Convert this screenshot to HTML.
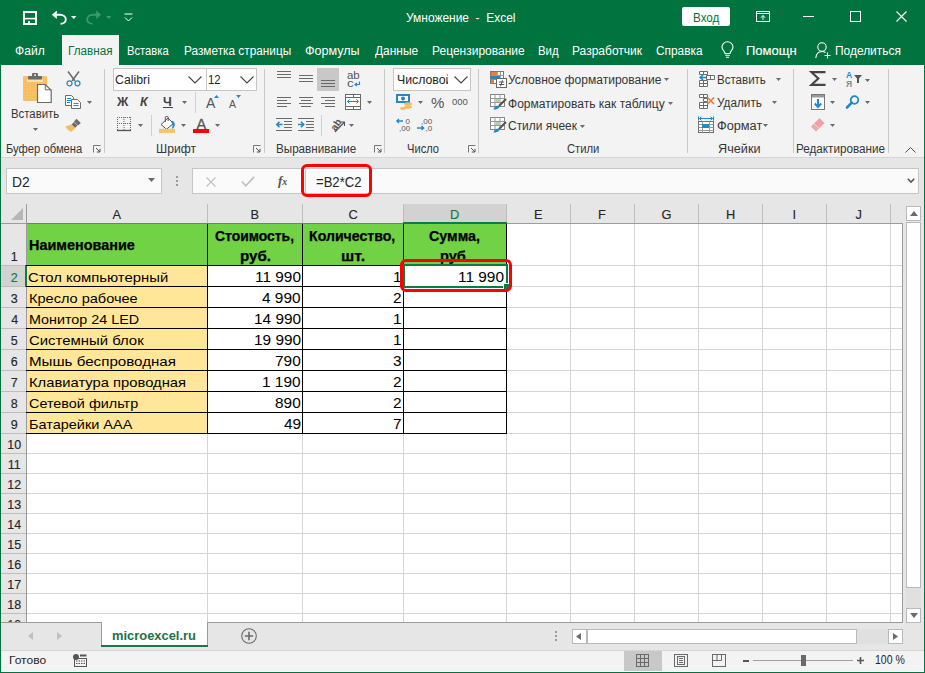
<!DOCTYPE html>
<html><head><meta charset="utf-8">
<style>
*{margin:0;padding:0;box-sizing:border-box}
html,body{width:925px;height:673px;overflow:hidden;background:#fff;font-family:"Liberation Sans",sans-serif;position:relative}
.a{position:absolute}
.t{white-space:nowrap}
svg{overflow:visible}
</style></head><body>
<div class="a" style="left:0px;top:0px;width:925px;height:65px;background:#00733f;"></div>
<svg class="a" style="left:23px;top:11px" width="14" height="14" viewBox="0 0 14 14"><path d="M1 1H13V13H1Z" fill="none" stroke="#fff" stroke-width="2"/><path d="M2 7.6H12" stroke="#fff" stroke-width="1.6"/><rect x="5" y="10.2" width="2" height="3" fill="#fff"/></svg>
<svg class="a" style="left:51px;top:10px" width="16" height="15" viewBox="0 0 16 15"><path d="M5 4.8H9C12.5 4.8 14.8 7 14.8 9.5C14.8 12 12.5 13.8 9.5 13.8" fill="none" stroke="#fff" stroke-width="1.9"/><path d="M0.8 4.8L5.8 0.6V9Z" fill="#fff"/></svg>
<svg class="a" style="left:71px;top:16px" width="6" height="3" viewBox="0 0 6 3"><path d="M0 0H5.5L2.75 3Z" fill="#fff"/></svg>
<svg class="a" style="left:86px;top:10px" width="16" height="15" viewBox="0 0 16 15"><path d="M11 4.8H7C3.5 4.8 1.2 7 1.2 9.5C1.2 12 3.5 13.8 6.5 13.8" fill="none" stroke="#3a9a68" stroke-width="1.9"/><path d="M15.2 4.8L10.2 0.6V9Z" fill="#3a9a68"/></svg>
<svg class="a" style="left:106px;top:16px" width="6" height="3" viewBox="0 0 6 3"><path d="M0 0H5.5L2.75 3Z" fill="#3d9c6c"/></svg>
<svg class="a" style="left:124px;top:13px" width="9" height="9" viewBox="0 0 9 9"><path d="M0.5 1H8.5" stroke="#fff" stroke-width="1"/><path d="M1 4.5L4.5 8L8 4.5" fill="none" stroke="#fff" stroke-width="1"/></svg>
<div class="a t" style="left:406.33px;top:12.00px;font-size:12.3px;line-height:12.3px;color:#fff;font-weight:normal;font-style:normal;transform:scaleX(0.9721);transform-origin:0 0;">Умножение&nbsp; -&nbsp; Excel</div>
<div class="a" style="left:682px;top:7px;width:48px;height:19px;background:#fff;border-radius:2px"></div>
<div class="a t" style="left:693.03px;top:12.00px;font-size:12px;line-height:12px;color:#00733f;font-weight:normal;font-style:normal;transform:scaleX(0.9731);transform-origin:0 0;">Вход</div>
<svg class="a" style="left:756px;top:11px" width="14" height="11" viewBox="0 0 14 11"><rect x="0.5" y="0.5" width="13" height="10" fill="none" stroke="#fff" stroke-width="1"/><path d="M0.5 2.5H13.5" stroke="#fff" stroke-width="1"/><path d="M7 9V4.5M4.8 6.8L7 4.5L9.2 6.8" fill="none" stroke="#fff" stroke-width="1"/></svg>
<div class="a" style="left:803px;top:16px;width:11px;height:1px;background:#fff;"></div>
<svg class="a" style="left:850px;top:11px" width="11" height="11" viewBox="0 0 11 11"><rect x="0.5" y="0.5" width="10" height="10" fill="none" stroke="#fff" stroke-width="1"/></svg>
<svg class="a" style="left:896px;top:11px" width="11" height="11" viewBox="0 0 11 11"><path d="M0.5 0.5L10.5 10.5M10.5 0.5L0.5 10.5" stroke="#fff" stroke-width="1.1"/></svg>
<div class="a" style="left:62px;top:35px;width:57px;height:30px;background:#f3f3f3;"></div>
<div class="a t" style="left:15.12px;top:45.00px;font-size:12.3px;line-height:12.3px;color:#fff;font-weight:normal;font-style:normal;transform:scaleX(0.9828);transform-origin:0 0;">Файл</div>
<div class="a t" style="left:67.85px;top:45.00px;font-size:12.3px;line-height:12.3px;color:#00733f;font-weight:normal;font-style:normal;transform:scaleX(0.9511);transform-origin:0 0;">Главная</div>
<div class="a t" style="left:126.79px;top:45.00px;font-size:12.3px;line-height:12.3px;color:#fff;font-weight:normal;font-style:normal;transform:scaleX(0.9111);transform-origin:0 0;">Вставка</div>
<div class="a t" style="left:183.74px;top:45.00px;font-size:12.3px;line-height:12.3px;color:#fff;font-weight:normal;font-style:normal;transform:scaleX(0.9609);transform-origin:0 0;">Разметка страницы</div>
<div class="a t" style="left:304.98px;top:45.00px;font-size:12.3px;line-height:12.3px;color:#fff;font-weight:normal;font-style:normal;transform:scaleX(1.0212);transform-origin:0 0;">Формулы</div>
<div class="a t" style="left:374.70px;top:45.00px;font-size:12.3px;line-height:12.3px;color:#fff;font-weight:normal;font-style:normal;transform:scaleX(0.9727);transform-origin:0 0;">Данные</div>
<div class="a t" style="left:432.12px;top:45.00px;font-size:12.3px;line-height:12.3px;color:#fff;font-weight:normal;font-style:normal;transform:scaleX(0.9763);transform-origin:0 0;">Рецензирование</div>
<div class="a t" style="left:538.47px;top:45.00px;font-size:12.3px;line-height:12.3px;color:#fff;font-weight:normal;font-style:normal;transform:scaleX(0.9286);transform-origin:0 0;">Вид</div>
<div class="a t" style="left:572.42px;top:45.00px;font-size:12.3px;line-height:12.3px;color:#fff;font-weight:normal;font-style:normal;transform:scaleX(0.9761);transform-origin:0 0;">Разработчик</div>
<div class="a t" style="left:656.03px;top:45.00px;font-size:12.3px;line-height:12.3px;color:#fff;font-weight:normal;font-style:normal;transform:scaleX(0.9660);transform-origin:0 0;">Справка</div>
<div class="a t" style="left:746.34px;top:45.00px;font-size:12.3px;line-height:12.3px;color:#fff;font-weight:normal;font-style:normal;transform:scaleX(1.0587);transform-origin:0 0;-webkit-text-stroke:0.15px #fff;">Помощн</div>
<div class="a t" style="left:834.53px;top:45.00px;font-size:12.3px;line-height:12.3px;color:#fff;font-weight:normal;font-style:normal;transform:scaleX(0.9697);transform-origin:0 0;">Поделиться</div>
<svg class="a" style="left:721px;top:42px" width="13" height="16" viewBox="0 0 13 16"><path d="M4 11.5 C4 9 1 8 1 5.2 A5.5 5.5 0 0 1 12 5.2 C12 8 9 9 9 11.5 Z" fill="none" stroke="#fff" stroke-width="1.1"/><path d="M4.2 13.3H8.8M5 15.3H8" stroke="#fff" stroke-width="1.1"/></svg>
<svg class="a" style="left:815px;top:42px" width="17" height="17" viewBox="0 0 17 17"><circle cx="7" cy="5" r="4.2" fill="none" stroke="#fff" stroke-width="1.1"/><path d="M0.8 16 C1.2 11.5 4 9.5 7 9.5 C8.5 9.5 9.5 9.8 10.5 10.5" fill="none" stroke="#fff" stroke-width="1.1"/><path d="M12.5 10.5V16.5M9.5 13.5H15.5" stroke="#fff" stroke-width="1.1"/></svg>
<div class="a" style="left:1px;top:65px;width:923px;height:92px;background:#f3f3f3;"></div>
<div class="a" style="left:1px;top:157px;width:923px;height:1px;background:#d5d5d5;"></div>
<div class="a" style="left:104px;top:69px;width:1px;height:84px;background:#c8c8c8;"></div>
<div class="a" style="left:264px;top:69px;width:1px;height:84px;background:#c8c8c8;"></div>
<div class="a" style="left:384px;top:69px;width:1px;height:84px;background:#c8c8c8;"></div>
<div class="a" style="left:478px;top:69px;width:1px;height:84px;background:#c8c8c8;"></div>
<div class="a" style="left:687px;top:69px;width:1px;height:84px;background:#c8c8c8;"></div>
<div class="a" style="left:793px;top:69px;width:1px;height:84px;background:#c8c8c8;"></div>
<div class="a" style="left:888px;top:69px;width:1px;height:84px;background:#c8c8c8;"></div>
<div class="a t" style="left:5.79px;top:143.00px;font-size:12.3px;line-height:12.3px;color:#363636;font-weight:normal;font-style:normal;transform:scaleX(0.9133);transform-origin:0 0;">Буфер обмена</div>
<svg class="a" style="left:93px;top:145px" width="8" height="8" viewBox="0 0 8 8"><path d="M0.5 7.5V0.5H7.5" fill="none" stroke="#777" stroke-width="1"/><path d="M3 3L7 7M7 3.8V7H3.8" fill="none" stroke="#555" stroke-width="1"/></svg>
<div class="a t" style="left:156.41px;top:143.00px;font-size:12.3px;line-height:12.3px;color:#363636;font-weight:normal;font-style:normal;transform:scaleX(0.9897);transform-origin:0 0;">Шрифт</div>
<svg class="a" style="left:253px;top:145px" width="8" height="8" viewBox="0 0 8 8"><path d="M0.5 7.5V0.5H7.5" fill="none" stroke="#777" stroke-width="1"/><path d="M3 3L7 7M7 3.8V7H3.8" fill="none" stroke="#555" stroke-width="1"/></svg>
<div class="a t" style="left:276.05px;top:143.00px;font-size:12.3px;line-height:12.3px;color:#363636;font-weight:normal;font-style:normal;transform:scaleX(0.9470);transform-origin:0 0;">Выравнивание</div>
<svg class="a" style="left:374px;top:145px" width="8" height="8" viewBox="0 0 8 8"><path d="M0.5 7.5V0.5H7.5" fill="none" stroke="#777" stroke-width="1"/><path d="M3 3L7 7M7 3.8V7H3.8" fill="none" stroke="#555" stroke-width="1"/></svg>
<div class="a t" style="left:406.69px;top:143.00px;font-size:12.3px;line-height:12.3px;color:#363636;font-weight:normal;font-style:normal;transform:scaleX(0.9059);transform-origin:0 0;">Число</div>
<svg class="a" style="left:468px;top:145px" width="8" height="8" viewBox="0 0 8 8"><path d="M0.5 7.5V0.5H7.5" fill="none" stroke="#777" stroke-width="1"/><path d="M3 3L7 7M7 3.8V7H3.8" fill="none" stroke="#555" stroke-width="1"/></svg>
<div class="a t" style="left:566.59px;top:143.00px;font-size:12.3px;line-height:12.3px;color:#363636;font-weight:normal;font-style:normal;transform:scaleX(0.9147);transform-origin:0 0;">Стили</div>
<div class="a t" style="left:718.47px;top:143.00px;font-size:12.3px;line-height:12.3px;color:#363636;font-weight:normal;font-style:normal;transform:scaleX(1.0308);transform-origin:0 0;">Ячейки</div>
<div class="a t" style="left:796.35px;top:143.00px;font-size:12.3px;line-height:12.3px;color:#363636;font-weight:normal;font-style:normal;transform:scaleX(0.9511);transform-origin:0 0;">Редактирование</div>
<svg class="a" style="left:905px;top:147px" width="11" height="6" viewBox="0 0 11 6"><path d="M0.5 5.5L5.5 0.5L10.5 5.5" fill="none" stroke="#555" stroke-width="1"/></svg>
<svg class="a" style="left:23px;top:73px" width="29" height="31" viewBox="0 0 29 31">
<defs><pattern id="dots" width="3" height="3" patternUnits="userSpaceOnUse"><rect width="3" height="3" fill="#f7bd5c"/><circle cx="1" cy="1" r="0.6" fill="#fbd89b"/></pattern></defs>
<rect x="0" y="3" width="24" height="25" rx="1" fill="url(#dots)"/>
<rect x="4" y="6.3" width="16" height="2.6" fill="#fbe2b0"/>
<rect x="5" y="3" width="14" height="3.6" rx="0.8" fill="#6b6b6b"/>
<rect x="9" y="0" width="6" height="4" rx="1" fill="#6b6b6b"/>
<rect x="11.2" y="1.3" width="1.8" height="1.6" fill="#f3f3f3"/>
<path d="M14.5 11.5H22.3L28.2 17.3V29.5H14.5Z" fill="#fff" stroke="#6b6b6b" stroke-width="1.2"/>
<path d="M22.3 11.5V16.8H28.2" fill="none" stroke="#6b6b6b" stroke-width="1"/>
</svg>
<div class="a t" style="left:10.68px;top:108.00px;font-size:12.3px;line-height:12.3px;color:#363636;font-weight:normal;font-style:normal;transform:scaleX(0.9235);transform-origin:0 0;">Вставить</div>
<svg class="a" style="left:33px;top:128px" width="5" height="3" viewBox="0 0 5 3"><path d="M0 0H5L2.5 3Z" fill="#6a6a6a"/></svg>
<svg class="a" style="left:66px;top:71px" width="15" height="16" viewBox="0 0 15 16"><path d="M2 0.5L9 10M13 0.5L6 10" stroke="#6a6a6a" stroke-width="1.5"/><circle cx="3.5" cy="12.3" r="2.5" fill="none" stroke="#1f8ac8" stroke-width="1.2"/><circle cx="11.5" cy="12.3" r="2.5" fill="none" stroke="#1f8ac8" stroke-width="1.2"/></svg>
<svg class="a" style="left:65px;top:95px" width="16" height="14" viewBox="0 0 16 14"><path d="M0.5 0.5H6.5L8.5 2.5V10.5H0.5Z" fill="#fff" stroke="#6d6d6d" stroke-width="1"/><path d="M2 3.5H6M2 5.5H6M2 7.5H5" stroke="#1f8ac8" stroke-width="1"/><path d="M6.5 4.5H12.5L15.5 7.5V13.5H6.5Z" fill="#fff" stroke="#6d6d6d" stroke-width="1"/><path d="M8.5 8.5H13.5M8.5 10.5H13.5" stroke="#1f8ac8" stroke-width="1"/></svg>
<svg class="a" style="left:87px;top:101px" width="5" height="3" viewBox="0 0 5 3"><path d="M0 0H5L2.5 3Z" fill="#6a6a6a"/></svg>
<svg class="a" style="left:65px;top:118px" width="17" height="14" viewBox="0 0 17 14"><path d="M11.5 0.8L15.8 5 L13 7.5 L9 3.5Z" fill="#6d6d6d"/><path d="M9 4L12.5 7.5L10 10L6.5 6.5Z" fill="#6d6d6d"/><path d="M6.3 6.5L10 10.2L6.5 13.7C4.5 13.5 1.5 11 0.3 8.5Z" fill="#f7bd5c"/></svg>
<div class="a" style="left:113px;top:68px;width:94px;height:23px;background:#fff;border:1px solid #c6c6c6"></div>
<div class="a" style="left:206px;top:68px;width:51px;height:23px;background:#fff;border:1px solid #c6c6c6"></div>
<div class="a t" style="left:115.31px;top:74.00px;font-size:12.5px;line-height:12.5px;color:#262626;font-weight:normal;font-style:normal;transform:scaleX(0.9853);transform-origin:0 0;">Calibri</div>
<svg class="a" style="left:188px;top:76px" width="14" height="8" viewBox="0 0 14 8"><path d="M0.5 0.5L7 7L13.5 0.5" fill="none" stroke="#444" stroke-width="1.1"/></svg>
<div class="a t" style="left:208.49px;top:74.00px;font-size:12.5px;line-height:12.5px;color:#262626;font-weight:normal;font-style:normal;transform:scaleX(0.9077);transform-origin:0 0;">12</div>
<svg class="a" style="left:240px;top:76px" width="14" height="8" viewBox="0 0 14 8"><path d="M0.5 0.5L7 7L13.5 0.5" fill="none" stroke="#444" stroke-width="1.1"/></svg>
<div class="a t" style="left:117.00px;top:96.00px;font-size:12.5px;line-height:12.5px;color:#444444;font-weight:bold;font-style:normal;">Ж</div>
<div class="a t" style="left:140.00px;top:96.00px;font-size:12.5px;line-height:12.5px;color:#444444;font-weight:bold;font-style:normal;font-style:italic">К</div>
<div class="a t" style="left:163.00px;top:96.00px;font-size:12.5px;line-height:12.5px;color:#444444;font-weight:bold;font-style:normal;">Ч</div>
<div class="a" style="left:163px;top:107px;width:10px;height:1.3px;background:#444444;"></div>
<svg class="a" style="left:182px;top:101px" width="5" height="3" viewBox="0 0 5 3"><path d="M0 0H5L2.5 3Z" fill="#6a6a6a"/></svg>
<div class="a" style="left:195px;top:92px;width:1px;height:21px;background:#d0d0d0;"></div>
<div class="a t" style="left:206.00px;top:96.00px;font-size:14px;line-height:14px;color:#555;font-weight:normal;font-style:normal;">A</div>
<svg class="a" style="left:214px;top:95px" width="5" height="3" viewBox="0 0 5 3"><path d="M0 3L2.5 0L5 3Z" fill="#1f8ac8"/></svg>
<div class="a t" style="left:229.00px;top:99.00px;font-size:10.5px;line-height:10.5px;color:#555;font-weight:normal;font-style:normal;">A</div>
<svg class="a" style="left:236px;top:95px" width="5" height="3" viewBox="0 0 5 3"><path d="M0 0L2.5 3L5 0Z" fill="#1f8ac8"/></svg>
<svg class="a" style="left:117px;top:117px" width="14" height="15" viewBox="0 0 14 15"><path d="M0.5 0V13M13.5 0V13M7 0V13M0 0.5H14M0 6.5H14" fill="none" stroke="#666" stroke-width="1" stroke-dasharray="1 1"/><path d="M0 13.5H14" stroke="#555" stroke-width="1.3"/></svg>
<svg class="a" style="left:138px;top:124px" width="5" height="3" viewBox="0 0 5 3"><path d="M0 0H5L2.5 3Z" fill="#6a6a6a"/></svg>
<div class="a" style="left:151px;top:115px;width:1px;height:21px;background:#d0d0d0;"></div>
<svg class="a" style="left:159px;top:116px" width="17" height="18" viewBox="0 0 17 18"><path d="M2 8.5L9 2L14.5 7.5L7.5 13.2Z" fill="#fff" stroke="#555" stroke-width="1"/><path d="M6.3 6V1.3Q6.3 0.5 7.3 0.5H8.2Q9.2 0.5 9.2 1.3V5" fill="none" stroke="#555" stroke-width="1"/><path d="M13.2 4.8C16.3 6 16.8 9.5 13.8 12.8L12.8 12.2C14 10 14 8 12.5 6.5Z" fill="#1f8ac8"/><rect x="0" y="12.8" width="16" height="4.3" fill="#f9c46a"/></svg>
<svg class="a" style="left:181px;top:124px" width="5" height="3" viewBox="0 0 5 3"><path d="M0 0H5L2.5 3Z" fill="#6a6a6a"/></svg>
<div class="a t" style="left:196.50px;top:117.00px;font-size:14.5px;line-height:14.5px;color:#555;font-weight:normal;font-style:normal;-webkit-text-stroke:0.3px #555;">A</div>
<div class="a" style="left:193px;top:129px;width:16px;height:4px;background:#fe0000;"></div>
<svg class="a" style="left:215px;top:124px" width="5" height="3" viewBox="0 0 5 3"><path d="M0 0H5L2.5 3Z" fill="#6a6a6a"/></svg>
<svg class="a" style="left:277px;top:71px" width="14" height="9" viewBox="0 0 14 9"><rect x="0" y="0" width="14" height="1" fill="#6a6a6a"/><rect x="0" y="3" width="14" height="1" fill="#6a6a6a"/><rect x="0" y="6" width="14" height="1" fill="#6a6a6a"/></svg>
<svg class="a" style="left:299px;top:75px" width="14" height="9" viewBox="0 0 14 9"><rect x="0" y="0" width="14" height="1" fill="#6a6a6a"/><rect x="0" y="3" width="14" height="1" fill="#6a6a6a"/><rect x="0" y="6" width="14" height="1" fill="#6a6a6a"/></svg>
<div class="a" style="left:317px;top:68px;width:22px;height:23px;background:#c8c8c8;"></div>
<svg class="a" style="left:321px;top:80px" width="14" height="9" viewBox="0 0 14 9"><rect x="0" y="0" width="14" height="1" fill="#6a6a6a"/><rect x="0" y="3" width="14" height="1" fill="#6a6a6a"/><rect x="0" y="6" width="14" height="1" fill="#6a6a6a"/></svg>
<div class="a t" style="left:347.00px;top:70.00px;font-size:11px;line-height:11px;color:#555;font-weight:normal;font-style:normal;transform:scaleX(1.0417);transform-origin:0 0;">ab</div>
<div class="a t" style="left:347.00px;top:78.00px;font-size:11px;line-height:11px;color:#555;font-weight:normal;font-style:normal;transform:scaleX(1.2000);transform-origin:0 0;">c</div>
<svg class="a" style="left:354px;top:81px" width="7" height="6" viewBox="0 0 7 6"><path d="M5.5 0.5V3.5H1.5M3 2L1 3.5L3 5" fill="none" stroke="#1f8ac8" stroke-width="1.2"/></svg>
<svg class="a" style="left:277px;top:97px" width="14" height="12" viewBox="0 0 14 12"><rect x="0" y="0" width="14" height="1" fill="#6a6a6a"/><rect x="0" y="3" width="10" height="1" fill="#6a6a6a"/><rect x="0" y="6" width="14" height="1" fill="#6a6a6a"/><rect x="0" y="9" width="10" height="1" fill="#6a6a6a"/></svg>
<svg class="a" style="left:299px;top:97px" width="14" height="12" viewBox="0 0 14 12"><rect x="0.0" y="0" width="14" height="1" fill="#6a6a6a"/><rect x="2.0" y="3" width="10" height="1" fill="#6a6a6a"/><rect x="0.0" y="6" width="14" height="1" fill="#6a6a6a"/><rect x="2.0" y="9" width="10" height="1" fill="#6a6a6a"/></svg>
<svg class="a" style="left:321px;top:97px" width="14" height="12" viewBox="0 0 14 12"><rect x="0" y="0" width="14" height="1" fill="#6a6a6a"/><rect x="4" y="3" width="10" height="1" fill="#6a6a6a"/><rect x="0" y="6" width="14" height="1" fill="#6a6a6a"/><rect x="4" y="9" width="10" height="1" fill="#6a6a6a"/></svg>
<svg class="a" style="left:345px;top:94px" width="16" height="16" viewBox="0 0 16 16"><rect x="0.5" y="0.5" width="15" height="15" fill="#fff" stroke="#6a6a6a" stroke-width="1"/><path d="M0.5 3.5H15.5M0.5 12.5H15.5M8.5 0.5V3.5M8.5 12.5V15.5" stroke="#6a6a6a" stroke-width="1"/><path d="M2.5 7.5H13.5M4.5 5.5L2.5 7.5L4.5 9.5M11.5 5.5L13.5 7.5L11.5 9.5" fill="none" stroke="#1f8ac8" stroke-width="1"/></svg>
<svg class="a" style="left:367px;top:101px" width="5" height="3" viewBox="0 0 5 3"><path d="M0 0H5L2.5 3Z" fill="#6a6a6a"/></svg>
<svg class="a" style="left:276px;top:118px" width="16" height="15" viewBox="0 0 16 15"><path d="M0 0.5H16M8 3.5H16M8 6.5H16M8 9.5H16M0 12.5H16" stroke="#6a6a6a" stroke-width="1"/><path d="M0.8 6.5H6.5M3.5 3.8L0.8 6.5L3.5 9.2" fill="none" stroke="#1f8ac8" stroke-width="1.6"/></svg>
<svg class="a" style="left:298px;top:118px" width="16" height="15" viewBox="0 0 16 15"><path d="M0 0.5H16M8 3.5H16M8 6.5H16M8 9.5H16M0 12.5H16" stroke="#6a6a6a" stroke-width="1"/><path d="M0 6.5H5.7M3 3.8L5.7 6.5L3 9.2" fill="none" stroke="#1f8ac8" stroke-width="1.6"/></svg>
<div class="a" style="left:321px;top:115px;width:1px;height:21px;background:#d0d0d0;"></div>
<svg class="a" style="left:329px;top:117px" width="17" height="16" viewBox="0 0 17 16"><text x="1" y="12" font-size="10" font-weight="bold" fill="#555" transform="rotate(-55 6 8)" font-family="Liberation Sans">ab</text><path d="M6 15L15 5.5M11.5 5H15.5V9" fill="none" stroke="#555" stroke-width="1.1"/></svg>
<svg class="a" style="left:349px;top:124px" width="5" height="3" viewBox="0 0 5 3"><path d="M0 0H5L2.5 3Z" fill="#6a6a6a"/></svg>
<div class="a" style="left:393px;top:68px;width:78px;height:23px;background:#fff;border:1px solid #c6c6c6"></div>
<div class="a t" style="left:397.00px;top:74.00px;font-size:12.3px;line-height:12.3px;color:#262626;font-weight:normal;font-style:normal;width:51px;overflow:hidden;">Числовой</div>
<svg class="a" style="left:454px;top:76px" width="14" height="8" viewBox="0 0 14 8"><path d="M0.5 0.5L7 7L13.5 0.5" fill="none" stroke="#444" stroke-width="1.1"/></svg>
<svg class="a" style="left:396px;top:94px" width="17" height="16" viewBox="0 0 17 16"><rect x="0" y="0" width="14" height="9" fill="#1f8ac8"/><rect x="2" y="2" width="10" height="5" fill="#fff"/><circle cx="7" cy="4.5" r="2" fill="#1f8ac8"/><ellipse cx="12" cy="10" rx="4" ry="1.7" fill="#f7bd5c"/><ellipse cx="12" cy="13" rx="4" ry="1.7" fill="#f7bd5c"/><ellipse cx="7" cy="14.5" rx="3" ry="1.4" fill="#f7bd5c"/></svg>
<svg class="a" style="left:418px;top:101px" width="5" height="3" viewBox="0 0 5 3"><path d="M0 0H5L2.5 3Z" fill="#6a6a6a"/></svg>
<div class="a t" style="left:431.00px;top:95.00px;font-size:15px;line-height:15px;color:#555;font-weight:normal;font-style:normal;">%</div>
<div class="a t" style="left:452.00px;top:97.00px;font-size:9.5px;line-height:9.5px;color:#555;font-weight:normal;font-style:normal;">000</div>
<div class="a t" style="left:405.50px;top:118.00px;font-size:8px;line-height:8px;color:#555;font-weight:normal;font-style:normal;">0</div>
<div class="a t" style="left:399.00px;top:125.00px;font-size:8px;line-height:8px;color:#555;font-weight:normal;font-style:normal;">,00</div>
<svg class="a" style="left:396px;top:118px" width="8" height="6" viewBox="0 0 8 6"><path d="M7 3H0.8M3 1L0.8 3L3 5" fill="none" stroke="#1f8ac8" stroke-width="1.3"/></svg>
<div class="a t" style="left:421.00px;top:118.00px;font-size:8px;line-height:8px;color:#555;font-weight:normal;font-style:normal;">,00</div>
<div class="a t" style="left:425.50px;top:125.00px;font-size:8px;line-height:8px;color:#555;font-weight:normal;font-style:normal;">,0</div>
<svg class="a" style="left:417px;top:125px" width="8" height="6" viewBox="0 0 8 6"><path d="M0 3H6.5M4.5 1L6.7 3L4.5 5" fill="none" stroke="#1f8ac8" stroke-width="1.3"/></svg>
<svg class="a" style="left:490px;top:71px" width="17" height="17" viewBox="0 0 17 17"><rect x="0.5" y="0.5" width="13" height="12" fill="#fff" stroke="#777" stroke-width="1"/><path d="M7 0.5V12.5M0.5 4.5H13.5M0.5 8.5H13.5M10.5 0.5V4.5" stroke="#999" stroke-width="1"/><rect x="1" y="1" width="6.5" height="3.5" fill="#ed7d31"/><rect x="1" y="5" width="9.5" height="3.3" fill="#1f8ac8"/><rect x="1" y="9" width="3" height="3.5" fill="#ed7d31"/><rect x="6.5" y="7.5" width="10" height="9" fill="#fff" stroke="#666" stroke-width="1"/><path d="M8.8 11H14.2M8.8 13.5H14.2M12.5 9.2L10.5 15.3" stroke="#444" stroke-width="0.9"/></svg>
<div class="a t" style="left:508.02px;top:74.00px;font-size:12.3px;line-height:12.3px;color:#363636;font-weight:normal;font-style:normal;transform:scaleX(0.9806);transform-origin:0 0;">Условное форматирование</div>
<svg class="a" style="left:663.5px;top:78px" width="5" height="3" viewBox="0 0 5 3"><path d="M0 0H5L2.5 3Z" fill="#6a6a6a"/></svg>
<svg class="a" style="left:490px;top:94px" width="17" height="16" viewBox="0 0 17 16"><rect x="0.5" y="0.5" width="14" height="12" fill="#fff" stroke="#888"/><path d="M0.5 4.5H14.5M0.5 8.5H14.5M5 0.5V12.5M10 0.5V12.5" stroke="#999"/><rect x="5.5" y="5" width="4" height="3" fill="#a8d5a8"/><path d="M16 5L9 12" stroke="#555" stroke-width="2.2"/><path d="M8.5 11.5C6 11.5 4 13 3.5 15.5C6 15.5 8.5 15 9.5 13Z" fill="#1f8ac8"/></svg>
<div class="a t" style="left:508.02px;top:98.00px;font-size:12.3px;line-height:12.3px;color:#363636;font-weight:normal;font-style:normal;transform:scaleX(0.9799);transform-origin:0 0;">Форматировать как таблицу</div>
<svg class="a" style="left:668px;top:102px" width="5" height="3" viewBox="0 0 5 3"><path d="M0 0H5L2.5 3Z" fill="#6a6a6a"/></svg>
<svg class="a" style="left:490px;top:117px" width="17" height="16" viewBox="0 0 17 16"><rect x="0.5" y="0.5" width="14" height="12" fill="#fff" stroke="#888"/><path d="M0.5 4.5H14.5M0.5 8.5H14.5M5 0.5V12.5M10 0.5V12.5" stroke="#999"/><rect x="5.5" y="5" width="4" height="3" fill="#a8d5a8"/><path d="M16 5L9 12" stroke="#555" stroke-width="2.2"/><path d="M8.5 11.5C6 11.5 4 13 3.5 15.5C6 15.5 8.5 15 9.5 13Z" fill="#1f8ac8"/></svg>
<div class="a t" style="left:508.03px;top:120.00px;font-size:12.3px;line-height:12.3px;color:#363636;font-weight:normal;font-style:normal;transform:scaleX(0.9714);transform-origin:0 0;">Стили ячеек</div>
<svg class="a" style="left:580px;top:125px" width="5" height="3" viewBox="0 0 5 3"><path d="M0 0H5L2.5 3Z" fill="#6a6a6a"/></svg>
<svg class="a" style="left:698px;top:70px" width="18" height="18" viewBox="0 0 18 18">
<path d="M1.5 1.5H9.5V4.5H1.5Z M5.5 1.5V4.5" fill="#fff" stroke="#6d6d6d" stroke-width="1"/>
<path d="M8.5 5.5H16.5V9.5H8.5Z M12.5 5.5V9.5" fill="#fff" stroke="#6d6d6d" stroke-width="1"/>
<path d="M1.5 10.5H9.5V16.5H1.5Z M1.5 13.5H9.5 M5.5 10.5V16.5" fill="#fff" stroke="#6d6d6d" stroke-width="1"/>
<path d="M8 7.5H2.5M5 5L2.2 7.5L5 10" fill="none" stroke="#1f8ac8" stroke-width="1.6"/>
</svg>
<div class="a t" style="left:717.26px;top:74.00px;font-size:12.3px;line-height:12.3px;color:#363636;font-weight:normal;font-style:normal;transform:scaleX(0.9373);transform-origin:0 0;">Вставить</div>
<svg class="a" style="left:776px;top:78px" width="5" height="3" viewBox="0 0 5 3"><path d="M0 0H5L2.5 3Z" fill="#6a6a6a"/></svg>
<svg class="a" style="left:698px;top:93px" width="18" height="18" viewBox="0 0 18 18">
<path d="M1.5 1.5H9.5V4.5H1.5Z M5.5 1.5V4.5" fill="#fff" stroke="#6d6d6d" stroke-width="1"/>
<path d="M5.5 5.5H9.5V8.5H5.5Z" fill="#fff" stroke="#6d6d6d" stroke-width="1"/>
<path d="M1.5 9.5H9.5V15.5H1.5Z M1.5 12.5H9.5 M5.5 9.5V15.5" fill="#fff" stroke="#6d6d6d" stroke-width="1"/>
<path d="M9.5 4.5L16 11M16 4.5L9.5 11" stroke="#f07d2a" stroke-width="1.7"/>
</svg>
<div class="a t" style="left:717.04px;top:97.00px;font-size:12.3px;line-height:12.3px;color:#363636;font-weight:normal;font-style:normal;transform:scaleX(0.9565);transform-origin:0 0;">Удалить</div>
<svg class="a" style="left:772px;top:101px" width="5" height="3" viewBox="0 0 5 3"><path d="M0 0H5L2.5 3Z" fill="#6a6a6a"/></svg>
<svg class="a" style="left:698px;top:116px" width="17" height="18" viewBox="0 0 17 18">
<path d="M1.5 2.5H14.5M3.5 0.8L1.3 2.5L3.5 4.2M12.5 0.8L14.7 2.5L12.5 4.2M0.5 0.5V4.5M15.5 0.5V4.5" fill="none" stroke="#1f8ac8" stroke-width="1"/>
<rect x="0.5" y="5.5" width="15" height="11" fill="#fff" stroke="#6d6d6d"/>
<path d="M0.5 8.5H15.5M0.5 11.5H15.5M0.5 14.5H15.5M4.5 5.5V16.5M11.5 5.5V16.5" stroke="#9a9a9a" stroke-width="1"/>
<rect x="4" y="8" width="7" height="4" fill="#1f8ac8"/>
</svg>
<div class="a t" style="left:716.96px;top:120.00px;font-size:12.3px;line-height:12.3px;color:#363636;font-weight:normal;font-style:normal;transform:scaleX(1.0357);transform-origin:0 0;">Формат</div>
<svg class="a" style="left:763px;top:124px" width="5" height="3" viewBox="0 0 5 3"><path d="M0 0H5L2.5 3Z" fill="#6a6a6a"/></svg>
<svg class="a" style="left:810px;top:71px" width="16" height="15" viewBox="0 0 16 15"><path d="M15.5 1.2H1.5L8.3 7.5L1.5 13.8H15.5" fill="none" stroke="#444" stroke-width="2.2" stroke-linejoin="miter"/></svg>
<svg class="a" style="left:832px;top:78px" width="5" height="3" viewBox="0 0 5 3"><path d="M0 0H5L2.5 3Z" fill="#6a6a6a"/></svg>
<div class="a t" style="left:846.00px;top:71.00px;font-size:8.5px;line-height:8.5px;color:#1f8ac8;font-weight:bold;font-style:normal;">A</div>
<div class="a t" style="left:846.00px;top:80.00px;font-size:8.5px;line-height:8.5px;color:#8a8a8a;font-weight:bold;font-style:normal;">Я</div>
<svg class="a" style="left:854px;top:75px" width="8" height="8" viewBox="0 0 8 8"><path d="M0 0H8L5 3.5V8H3V3.5Z" fill="#555"/></svg>
<svg class="a" style="left:865px;top:79px" width="5" height="3" viewBox="0 0 5 3"><path d="M0 0H5L2.5 3Z" fill="#6a6a6a"/></svg>
<svg class="a" style="left:811px;top:94px" width="14" height="16" viewBox="0 0 14 16"><rect x="0.5" y="0.5" width="13" height="15" fill="#fff" stroke="#777"/><rect x="1" y="1" width="12" height="2.5" fill="#9a9a9a"/><path d="M7 5V13M3.8 9.5L7 13L10.2 9.5" fill="none" stroke="#1f8ac8" stroke-width="2"/></svg>
<svg class="a" style="left:830px;top:101px" width="5" height="3" viewBox="0 0 5 3"><path d="M0 0H5L2.5 3Z" fill="#6a6a6a"/></svg>
<svg class="a" style="left:846px;top:95px" width="14" height="14" viewBox="0 0 14 14"><circle cx="8.5" cy="5" r="3.8" fill="none" stroke="#1f8ac8" stroke-width="1.8"/><path d="M5.8 7.7L1 12.5" stroke="#1f8ac8" stroke-width="2.6" stroke-linecap="round"/></svg>
<svg class="a" style="left:865px;top:101px" width="5" height="3" viewBox="0 0 5 3"><path d="M0 0H5L2.5 3Z" fill="#6a6a6a"/></svg>
<svg class="a" style="left:811px;top:117px" width="14" height="15" viewBox="0 0 14 15"><path d="M8.5 1L13.5 6L6.5 13L1.5 8Z" fill="#f4a0aa"/><path d="M1.5 8L6.5 13L5 14.5L0 9.5Z" fill="#f4a0aa"/><path d="M3 6.5L8 11.5" stroke="#ffe9a0" stroke-width="1"/></svg>
<svg class="a" style="left:830px;top:124px" width="5" height="3" viewBox="0 0 5 3"><path d="M0 0H5L2.5 3Z" fill="#6a6a6a"/></svg>
<div class="a" style="left:1px;top:158px;width:923px;height:47px;background:#e6e6e6;"></div>
<div class="a" style="left:6px;top:168px;width:156px;height:26px;background:#fafafa;border:1px solid #c6c6c6"></div>
<div class="a t" style="left:12.41px;top:175.00px;font-size:14px;line-height:14px;color:#262626;font-weight:normal;font-style:normal;transform:scaleX(0.9875);transform-origin:0 0;">D2</div>
<svg class="a" style="left:148px;top:178px" width="7" height="4" viewBox="0 0 7 4"><path d="M0 0H7L3.5 4Z" fill="#6a6a6a"/></svg>
<div class="a" style="left:176px;top:176px;width:2px;height:2px;background:#9a9a9a;"></div>
<div class="a" style="left:176px;top:180px;width:2px;height:2px;background:#9a9a9a;"></div>
<div class="a" style="left:176px;top:184px;width:2px;height:2px;background:#9a9a9a;"></div>
<div class="a" style="left:192px;top:168px;width:113px;height:26px;background:#fafafa;border:1px solid #c6c6c6;border-right:none"></div>
<svg class="a" style="left:206px;top:177px" width="10" height="10" viewBox="0 0 10 10"><path d="M0.5 0.5L9.5 9.5M9.5 0.5L0.5 9.5" stroke="#c2c2c2" stroke-width="1.3"/></svg>
<svg class="a" style="left:241px;top:176px" width="14" height="11" viewBox="0 0 14 11"><path d="M0.8 5.5L4.8 9.8L13.2 0.8" fill="none" stroke="#c2c2c2" stroke-width="1.8"/></svg>
<div class="a t" style="left:278px;top:174px;font-family:'Liberation Serif',serif;font-style:italic;font-weight:bold;font-size:13px;line-height:13px;color:#555">f<span style="font-size:10px">x</span></div>
<div class="a" style="left:305px;top:168px;width:614px;height:26px;background:#fafafa;border:1px solid #c6c6c6"></div>
<div class="a t" style="left:316.37px;top:175.00px;font-size:14px;line-height:14px;color:#262626;font-weight:normal;font-style:normal;transform:scaleX(0.9340);transform-origin:0 0;">=B2*C2</div>
<svg class="a" style="left:907px;top:178px" width="8" height="5" viewBox="0 0 8 5"><path d="M0.8 0.8L4 4L7.2 0.8" fill="none" stroke="#555" stroke-width="1.6"/></svg>
<div class="a" style="left:301px;top:164px;width:71px;height:33px;background:transparent;border:3px solid #fe0000;border-radius:6px"></div>
<div class="a" style="left:1px;top:204px;width:902px;height:19px;background:#e6e6e6;"></div>
<div class="a" style="left:1px;top:224px;width:25px;height:398px;background:#e6e6e6;"></div>
<div class="a" style="left:27px;top:224px;width:875px;height:398px;background:#fff;"></div>
<div class="a" style="left:207px;top:224px;width:1px;height:398px;background:#d4d4d4;"></div>
<div class="a" style="left:302px;top:224px;width:1px;height:398px;background:#d4d4d4;"></div>
<div class="a" style="left:403px;top:224px;width:1px;height:398px;background:#d4d4d4;"></div>
<div class="a" style="left:506px;top:224px;width:1px;height:398px;background:#d4d4d4;"></div>
<div class="a" style="left:570px;top:224px;width:1px;height:398px;background:#d4d4d4;"></div>
<div class="a" style="left:634px;top:224px;width:1px;height:398px;background:#d4d4d4;"></div>
<div class="a" style="left:698px;top:224px;width:1px;height:398px;background:#d4d4d4;"></div>
<div class="a" style="left:762px;top:224px;width:1px;height:398px;background:#d4d4d4;"></div>
<div class="a" style="left:826px;top:224px;width:1px;height:398px;background:#d4d4d4;"></div>
<div class="a" style="left:890px;top:224px;width:1px;height:398px;background:#d4d4d4;"></div>
<div class="a" style="left:27px;top:265px;width:875px;height:1px;background:#d4d4d4;"></div>
<div class="a" style="left:27px;top:286px;width:875px;height:1px;background:#d4d4d4;"></div>
<div class="a" style="left:27px;top:307px;width:875px;height:1px;background:#d4d4d4;"></div>
<div class="a" style="left:27px;top:328px;width:875px;height:1px;background:#d4d4d4;"></div>
<div class="a" style="left:27px;top:349px;width:875px;height:1px;background:#d4d4d4;"></div>
<div class="a" style="left:27px;top:370px;width:875px;height:1px;background:#d4d4d4;"></div>
<div class="a" style="left:27px;top:391px;width:875px;height:1px;background:#d4d4d4;"></div>
<div class="a" style="left:27px;top:412px;width:875px;height:1px;background:#d4d4d4;"></div>
<div class="a" style="left:27px;top:433px;width:875px;height:1px;background:#d4d4d4;"></div>
<div class="a" style="left:27px;top:453px;width:875px;height:1px;background:#d4d4d4;"></div>
<div class="a" style="left:27px;top:473px;width:875px;height:1px;background:#d4d4d4;"></div>
<div class="a" style="left:27px;top:493px;width:875px;height:1px;background:#d4d4d4;"></div>
<div class="a" style="left:27px;top:513px;width:875px;height:1px;background:#d4d4d4;"></div>
<div class="a" style="left:27px;top:533px;width:875px;height:1px;background:#d4d4d4;"></div>
<div class="a" style="left:27px;top:553px;width:875px;height:1px;background:#d4d4d4;"></div>
<div class="a" style="left:27px;top:573px;width:875px;height:1px;background:#d4d4d4;"></div>
<div class="a" style="left:27px;top:593px;width:875px;height:1px;background:#d4d4d4;"></div>
<div class="a" style="left:27px;top:613px;width:875px;height:1px;background:#d4d4d4;"></div>
<div class="a" style="left:207px;top:204px;width:1px;height:19px;background:#bdbdbd;"></div>
<div class="a" style="left:302px;top:204px;width:1px;height:19px;background:#bdbdbd;"></div>
<div class="a" style="left:403px;top:204px;width:1px;height:19px;background:#bdbdbd;"></div>
<div class="a" style="left:506px;top:204px;width:1px;height:19px;background:#bdbdbd;"></div>
<div class="a" style="left:570px;top:204px;width:1px;height:19px;background:#bdbdbd;"></div>
<div class="a" style="left:634px;top:204px;width:1px;height:19px;background:#bdbdbd;"></div>
<div class="a" style="left:698px;top:204px;width:1px;height:19px;background:#bdbdbd;"></div>
<div class="a" style="left:762px;top:204px;width:1px;height:19px;background:#bdbdbd;"></div>
<div class="a" style="left:826px;top:204px;width:1px;height:19px;background:#bdbdbd;"></div>
<div class="a" style="left:890px;top:204px;width:1px;height:19px;background:#bdbdbd;"></div>
<div class="a" style="left:1px;top:265px;width:25px;height:1px;background:#bdbdbd;"></div>
<div class="a" style="left:1px;top:286px;width:25px;height:1px;background:#bdbdbd;"></div>
<div class="a" style="left:1px;top:307px;width:25px;height:1px;background:#bdbdbd;"></div>
<div class="a" style="left:1px;top:328px;width:25px;height:1px;background:#bdbdbd;"></div>
<div class="a" style="left:1px;top:349px;width:25px;height:1px;background:#bdbdbd;"></div>
<div class="a" style="left:1px;top:370px;width:25px;height:1px;background:#bdbdbd;"></div>
<div class="a" style="left:1px;top:391px;width:25px;height:1px;background:#bdbdbd;"></div>
<div class="a" style="left:1px;top:412px;width:25px;height:1px;background:#bdbdbd;"></div>
<div class="a" style="left:1px;top:433px;width:25px;height:1px;background:#bdbdbd;"></div>
<div class="a" style="left:1px;top:453px;width:25px;height:1px;background:#bdbdbd;"></div>
<div class="a" style="left:1px;top:473px;width:25px;height:1px;background:#bdbdbd;"></div>
<div class="a" style="left:1px;top:493px;width:25px;height:1px;background:#bdbdbd;"></div>
<div class="a" style="left:1px;top:513px;width:25px;height:1px;background:#bdbdbd;"></div>
<div class="a" style="left:1px;top:533px;width:25px;height:1px;background:#bdbdbd;"></div>
<div class="a" style="left:1px;top:553px;width:25px;height:1px;background:#bdbdbd;"></div>
<div class="a" style="left:1px;top:573px;width:25px;height:1px;background:#bdbdbd;"></div>
<div class="a" style="left:1px;top:593px;width:25px;height:1px;background:#bdbdbd;"></div>
<div class="a" style="left:1px;top:613px;width:25px;height:1px;background:#bdbdbd;"></div>
<div class="a" style="left:1px;top:223px;width:902px;height:1px;background:#9b9b9b;"></div>
<div class="a" style="left:26px;top:204px;width:1px;height:418px;background:#9b9b9b;"></div>
<svg class="a" style="left:11px;top:208px" width="12" height="12" viewBox="0 0 12 12"><path d="M12 0V12H0Z" fill="#b7b7b7"/></svg>
<div class="a" style="left:404px;top:204px;width:102px;height:18px;background:#d2d2d2;"></div>
<div class="a" style="left:403px;top:222px;width:104px;height:2px;background:#107c41;"></div>
<div class="a" style="left:1px;top:266px;width:24px;height:20px;background:#d2d2d2;"></div>
<div class="a" style="left:25px;top:265px;width:2px;height:22px;background:#107c41;"></div>
<div class="a t" style="left:112.50px;top:209.00px;font-size:12.8px;line-height:12.8px;color:#262626;font-weight:normal;font-style:normal;-webkit-text-stroke:0.15px #262626;">A</div>
<div class="a t" style="left:250.50px;top:209.00px;font-size:12.8px;line-height:12.8px;color:#262626;font-weight:normal;font-style:normal;-webkit-text-stroke:0.15px #262626;">B</div>
<div class="a t" style="left:348.50px;top:209.00px;font-size:12.8px;line-height:12.8px;color:#262626;font-weight:normal;font-style:normal;-webkit-text-stroke:0.15px #262626;">C</div>
<div class="a t" style="left:450.00px;top:209.00px;font-size:12.8px;line-height:12.8px;color:#107c41;font-weight:normal;font-style:normal;-webkit-text-stroke:0.15px #107c41;">D</div>
<div class="a t" style="left:534.00px;top:209.00px;font-size:12.8px;line-height:12.8px;color:#262626;font-weight:normal;font-style:normal;-webkit-text-stroke:0.15px #262626;">E</div>
<div class="a t" style="left:598.00px;top:209.00px;font-size:12.8px;line-height:12.8px;color:#262626;font-weight:normal;font-style:normal;-webkit-text-stroke:0.15px #262626;">F</div>
<div class="a t" style="left:661.50px;top:209.00px;font-size:12.8px;line-height:12.8px;color:#262626;font-weight:normal;font-style:normal;-webkit-text-stroke:0.15px #262626;">G</div>
<div class="a t" style="left:726.00px;top:209.00px;font-size:12.8px;line-height:12.8px;color:#262626;font-weight:normal;font-style:normal;-webkit-text-stroke:0.15px #262626;">H</div>
<div class="a t" style="left:792.50px;top:209.00px;font-size:12.8px;line-height:12.8px;color:#262626;font-weight:normal;font-style:normal;-webkit-text-stroke:0.15px #262626;">I</div>
<div class="a t" style="left:855.50px;top:209.00px;font-size:12.8px;line-height:12.8px;color:#262626;font-weight:normal;font-style:normal;-webkit-text-stroke:0.15px #262626;">J</div>
<div class="a t" style="left:10.70px;top:251.00px;font-size:12.5px;line-height:12.5px;color:#262626;font-weight:normal;font-style:normal;-webkit-text-stroke:0.15px #262626;">1</div>
<div class="a t" style="left:10.70px;top:272.00px;font-size:12.5px;line-height:12.5px;color:#107c41;font-weight:normal;font-style:normal;-webkit-text-stroke:0.15px #107c41;">2</div>
<div class="a t" style="left:10.70px;top:293.00px;font-size:12.5px;line-height:12.5px;color:#262626;font-weight:normal;font-style:normal;-webkit-text-stroke:0.15px #262626;">3</div>
<div class="a t" style="left:11.20px;top:314.00px;font-size:12.5px;line-height:12.5px;color:#262626;font-weight:normal;font-style:normal;-webkit-text-stroke:0.15px #262626;">4</div>
<div class="a t" style="left:10.70px;top:335.00px;font-size:12.5px;line-height:12.5px;color:#262626;font-weight:normal;font-style:normal;-webkit-text-stroke:0.15px #262626;">5</div>
<div class="a t" style="left:10.70px;top:356.00px;font-size:12.5px;line-height:12.5px;color:#262626;font-weight:normal;font-style:normal;-webkit-text-stroke:0.15px #262626;">6</div>
<div class="a t" style="left:10.70px;top:377.00px;font-size:12.5px;line-height:12.5px;color:#262626;font-weight:normal;font-style:normal;-webkit-text-stroke:0.15px #262626;">7</div>
<div class="a t" style="left:10.70px;top:398.00px;font-size:12.5px;line-height:12.5px;color:#262626;font-weight:normal;font-style:normal;-webkit-text-stroke:0.15px #262626;">8</div>
<div class="a t" style="left:10.70px;top:419.00px;font-size:12.5px;line-height:12.5px;color:#262626;font-weight:normal;font-style:normal;-webkit-text-stroke:0.15px #262626;">9</div>
<div class="a t" style="left:7.20px;top:439.00px;font-size:12.5px;line-height:12.5px;color:#262626;font-weight:normal;font-style:normal;-webkit-text-stroke:0.15px #262626;">10</div>
<div class="a t" style="left:7.70px;top:459.00px;font-size:12.5px;line-height:12.5px;color:#262626;font-weight:normal;font-style:normal;-webkit-text-stroke:0.15px #262626;">11</div>
<div class="a t" style="left:7.20px;top:479.00px;font-size:12.5px;line-height:12.5px;color:#262626;font-weight:normal;font-style:normal;-webkit-text-stroke:0.15px #262626;">12</div>
<div class="a t" style="left:7.20px;top:499.00px;font-size:12.5px;line-height:12.5px;color:#262626;font-weight:normal;font-style:normal;-webkit-text-stroke:0.15px #262626;">13</div>
<div class="a t" style="left:7.20px;top:519.00px;font-size:12.5px;line-height:12.5px;color:#262626;font-weight:normal;font-style:normal;-webkit-text-stroke:0.15px #262626;">14</div>
<div class="a t" style="left:7.20px;top:539.00px;font-size:12.5px;line-height:12.5px;color:#262626;font-weight:normal;font-style:normal;-webkit-text-stroke:0.15px #262626;">15</div>
<div class="a t" style="left:7.20px;top:559.00px;font-size:12.5px;line-height:12.5px;color:#262626;font-weight:normal;font-style:normal;-webkit-text-stroke:0.15px #262626;">16</div>
<div class="a t" style="left:7.20px;top:579.00px;font-size:12.5px;line-height:12.5px;color:#262626;font-weight:normal;font-style:normal;-webkit-text-stroke:0.15px #262626;">17</div>
<div class="a t" style="left:7.20px;top:599.00px;font-size:12.5px;line-height:12.5px;color:#262626;font-weight:normal;font-style:normal;-webkit-text-stroke:0.15px #262626;">18</div>
<div class="a t" style="left:7.20px;top:619.00px;font-size:12.5px;line-height:12.5px;color:#262626;font-weight:normal;font-style:normal;clip-path:inset(0 0 9px 0);">19</div>
<div class="a" style="left:27px;top:224px;width:180px;height:41px;background:#70d244;"></div>
<div class="a" style="left:208px;top:224px;width:94px;height:41px;background:#70d244;"></div>
<div class="a" style="left:303px;top:224px;width:100px;height:41px;background:#70d244;"></div>
<div class="a" style="left:404px;top:224px;width:102px;height:41px;background:#70d244;"></div>
<div class="a" style="left:27px;top:266px;width:180px;height:20px;background:#ffe699;"></div>
<div class="a" style="left:27px;top:287px;width:180px;height:20px;background:#ffe699;"></div>
<div class="a" style="left:27px;top:308px;width:180px;height:20px;background:#ffe699;"></div>
<div class="a" style="left:27px;top:329px;width:180px;height:20px;background:#ffe699;"></div>
<div class="a" style="left:27px;top:350px;width:180px;height:20px;background:#ffe699;"></div>
<div class="a" style="left:27px;top:371px;width:180px;height:20px;background:#ffe699;"></div>
<div class="a" style="left:27px;top:392px;width:180px;height:20px;background:#ffe699;"></div>
<div class="a" style="left:27px;top:413px;width:180px;height:20px;background:#ffe699;"></div>
<div class="a" style="left:207px;top:224px;width:1px;height:210px;background:#000;"></div>
<div class="a" style="left:302px;top:224px;width:1px;height:210px;background:#000;"></div>
<div class="a" style="left:403px;top:224px;width:1px;height:210px;background:#000;"></div>
<div class="a" style="left:506px;top:224px;width:1px;height:210px;background:#000;"></div>
<div class="a" style="left:26px;top:265px;width:481px;height:1px;background:#000;"></div>
<div class="a" style="left:26px;top:286px;width:481px;height:1px;background:#000;"></div>
<div class="a" style="left:26px;top:307px;width:481px;height:1px;background:#000;"></div>
<div class="a" style="left:26px;top:328px;width:481px;height:1px;background:#000;"></div>
<div class="a" style="left:26px;top:349px;width:481px;height:1px;background:#000;"></div>
<div class="a" style="left:26px;top:370px;width:481px;height:1px;background:#000;"></div>
<div class="a" style="left:26px;top:391px;width:481px;height:1px;background:#000;"></div>
<div class="a" style="left:26px;top:412px;width:481px;height:1px;background:#000;"></div>
<div class="a" style="left:26px;top:433px;width:481px;height:1px;background:#000;"></div>
<div class="a" style="left:27px;top:223px;width:376px;height:1px;background:#7a7a7a;"></div>
<div class="a t" style="left:28.87px;top:238.00px;font-size:14px;line-height:14px;color:#000;font-weight:bold;font-style:normal;transform:scaleX(1.0307);transform-origin:0 0;-webkit-text-stroke:0.25px #000;">Наименование</div>
<div class="a t" style="left:215.21px;top:229.00px;font-size:14px;line-height:14px;color:#000;font-weight:bold;font-style:normal;transform:scaleX(0.9923);transform-origin:0 0;-webkit-text-stroke:0.25px #000;">Стоимость,</div>
<div class="a t" style="left:239.62px;top:249.00px;font-size:14px;line-height:14px;color:#000;font-weight:bold;font-style:normal;transform:scaleX(1.0815);transform-origin:0 0;-webkit-text-stroke:0.25px #000;">руб.</div>
<div class="a t" style="left:309.49px;top:229.00px;font-size:14px;line-height:14px;color:#000;font-weight:bold;font-style:normal;transform:scaleX(1.0095);transform-origin:0 0;-webkit-text-stroke:0.25px #000;">Количество,</div>
<div class="a t" style="left:341.16px;top:249.00px;font-size:14px;line-height:14px;color:#000;font-weight:bold;font-style:normal;transform:scaleX(1.1368);transform-origin:0 0;-webkit-text-stroke:0.25px #000;">шт.</div>
<div class="a t" style="left:429.38px;top:229.00px;font-size:14px;line-height:14px;color:#000;font-weight:bold;font-style:normal;transform:scaleX(1.0229);transform-origin:0 0;-webkit-text-stroke:0.25px #000;">Сумма,</div>
<div class="a t" style="left:439.96px;top:249.00px;font-size:14px;line-height:14px;color:#000;font-weight:bold;font-style:normal;transform:scaleX(1.0417);transform-origin:0 0;-webkit-text-stroke:0.25px #000;">руб</div>
<div class="a t" style="left:28.10px;top:271.00px;font-size:13.5px;line-height:13.5px;color:#000;font-weight:normal;font-style:normal;transform:scaleX(1.1008);transform-origin:0 0;">Стол компьютерный</div>
<div class="a t" style="left:254.90px;top:270.00px;font-size:14px;line-height:14px;color:#000;font-weight:normal;font-style:normal;transform:scaleX(1.1000);transform-origin:0 0;">11 990</div>
<div class="a t" style="left:393.30px;top:270.00px;font-size:14px;line-height:14px;color:#000;font-weight:normal;font-style:normal;transform:scaleX(1.1000);transform-origin:0 0;">1</div>
<div class="a t" style="left:28.92px;top:292.00px;font-size:13.5px;line-height:13.5px;color:#000;font-weight:normal;font-style:normal;transform:scaleX(1.0770);transform-origin:0 0;">Кресло рабочее</div>
<div class="a t" style="left:261.50px;top:291.00px;font-size:14px;line-height:14px;color:#000;font-weight:normal;font-style:normal;transform:scaleX(1.1000);transform-origin:0 0;">4 990</div>
<div class="a t" style="left:393.30px;top:291.00px;font-size:14px;line-height:14px;color:#000;font-weight:normal;font-style:normal;transform:scaleX(1.1000);transform-origin:0 0;">2</div>
<div class="a t" style="left:28.94px;top:313.00px;font-size:13.5px;line-height:13.5px;color:#000;font-weight:normal;font-style:normal;transform:scaleX(1.0608);transform-origin:0 0;">Монитор 24 LED</div>
<div class="a t" style="left:253.80px;top:312.00px;font-size:14px;line-height:14px;color:#000;font-weight:normal;font-style:normal;transform:scaleX(1.1000);transform-origin:0 0;">14 990</div>
<div class="a t" style="left:393.30px;top:312.00px;font-size:14px;line-height:14px;color:#000;font-weight:normal;font-style:normal;transform:scaleX(1.1000);transform-origin:0 0;">1</div>
<div class="a t" style="left:28.90px;top:334.00px;font-size:13.5px;line-height:13.5px;color:#000;font-weight:normal;font-style:normal;transform:scaleX(1.1039);transform-origin:0 0;">Системный блок</div>
<div class="a t" style="left:253.80px;top:333.00px;font-size:14px;line-height:14px;color:#000;font-weight:normal;font-style:normal;transform:scaleX(1.1000);transform-origin:0 0;">19 990</div>
<div class="a t" style="left:393.30px;top:333.00px;font-size:14px;line-height:14px;color:#000;font-weight:normal;font-style:normal;transform:scaleX(1.1000);transform-origin:0 0;">1</div>
<div class="a t" style="left:28.88px;top:355.00px;font-size:13.5px;line-height:13.5px;color:#000;font-weight:normal;font-style:normal;transform:scaleX(1.1209);transform-origin:0 0;">Мышь беспроводная</div>
<div class="a t" style="left:274.70px;top:354.00px;font-size:14px;line-height:14px;color:#000;font-weight:normal;font-style:normal;transform:scaleX(1.1000);transform-origin:0 0;">790</div>
<div class="a t" style="left:393.30px;top:354.00px;font-size:14px;line-height:14px;color:#000;font-weight:normal;font-style:normal;transform:scaleX(1.1000);transform-origin:0 0;">3</div>
<div class="a t" style="left:28.91px;top:376.00px;font-size:13.5px;line-height:13.5px;color:#000;font-weight:normal;font-style:normal;transform:scaleX(1.0937);transform-origin:0 0;">Клавиатура проводная</div>
<div class="a t" style="left:261.50px;top:375.00px;font-size:14px;line-height:14px;color:#000;font-weight:normal;font-style:normal;transform:scaleX(1.1000);transform-origin:0 0;">1 190</div>
<div class="a t" style="left:393.30px;top:375.00px;font-size:14px;line-height:14px;color:#000;font-weight:normal;font-style:normal;transform:scaleX(1.1000);transform-origin:0 0;">2</div>
<div class="a t" style="left:28.93px;top:397.00px;font-size:13.5px;line-height:13.5px;color:#000;font-weight:normal;font-style:normal;transform:scaleX(1.0663);transform-origin:0 0;">Сетевой фильтр</div>
<div class="a t" style="left:274.70px;top:396.00px;font-size:14px;line-height:14px;color:#000;font-weight:normal;font-style:normal;transform:scaleX(1.1000);transform-origin:0 0;">890</div>
<div class="a t" style="left:393.30px;top:396.00px;font-size:14px;line-height:14px;color:#000;font-weight:normal;font-style:normal;transform:scaleX(1.1000);transform-origin:0 0;">2</div>
<div class="a t" style="left:28.93px;top:418.00px;font-size:13.5px;line-height:13.5px;color:#000;font-weight:normal;font-style:normal;transform:scaleX(1.0716);transform-origin:0 0;">Батарейки AAA</div>
<div class="a t" style="left:283.50px;top:417.00px;font-size:14px;line-height:14px;color:#000;font-weight:normal;font-style:normal;transform:scaleX(1.1000);transform-origin:0 0;">49</div>
<div class="a t" style="left:393.30px;top:417.00px;font-size:14px;line-height:14px;color:#000;font-weight:normal;font-style:normal;transform:scaleX(1.1000);transform-origin:0 0;">7</div>
<div class="a t" style="left:458.40px;top:270.00px;font-size:14px;line-height:14px;color:#000;font-weight:normal;font-style:normal;transform:scaleX(1.1000);transform-origin:0 0;">11 990</div>
<div class="a" style="left:403px;top:264px;width:105px;height:24px;background:transparent;border:2px solid #107c41"></div>
<div class="a" style="left:503px;top:283px;width:6px;height:6px;background:#107c41;border-left:1px solid #fff;border-top:1px solid #fff"></div>
<div class="a" style="left:400px;top:259px;width:112px;height:33px;background:transparent;border:3px solid #fe0000;border-radius:6px"></div>
<div class="a" style="left:902px;top:224px;width:1px;height:399px;background:#9b9b9b;"></div>
<div class="a" style="left:903px;top:204px;width:21px;height:419px;background:#e6e6e6;"></div>
<div class="a" style="left:1px;top:622px;width:902px;height:1px;background:#9b9b9b;"></div>
<div class="a" style="left:906px;top:206px;width:15px;height:15px;background:#fff;border:1px solid #b9b9b9"></div>
<svg class="a" style="left:910px;top:211px" width="8" height="5" viewBox="0 0 8 5"><path d="M0 5L4 0L8 5Z" fill="#6a6a6a"/></svg>
<div class="a" style="left:906px;top:222px;width:15px;height:366px;background:#fff;border:1px solid #b9b9b9"></div>
<div class="a" style="left:906px;top:588px;width:15px;height:20px;background:#e0e0e0;"></div>
<div class="a" style="left:906px;top:608px;width:15px;height:15px;background:#fff;border:1px solid #b9b9b9"></div>
<svg class="a" style="left:910px;top:613px" width="8" height="5" viewBox="0 0 8 5"><path d="M0 0L4 5L8 0Z" fill="#6a6a6a"/></svg>
<div class="a" style="left:1px;top:623px;width:923px;height:27px;background:#e6e6e6;"></div>
<svg class="a" style="left:28px;top:632px" width="5" height="8" viewBox="0 0 5 8"><path d="M5 0V8L0 4Z" fill="#c0c0c0"/></svg>
<svg class="a" style="left:57px;top:632px" width="5" height="8" viewBox="0 0 5 8"><path d="M0 0V8L5 4Z" fill="#c0c0c0"/></svg>
<div class="a" style="left:101px;top:622px;width:107px;height:25px;background:#fff;border-left:1px solid #9b9b9b;border-right:1px solid #9b9b9b"></div>
<div class="a" style="left:101px;top:645px;width:107px;height:2px;background:#217346;"></div>
<div class="a t" style="left:112.37px;top:630.00px;font-size:12.5px;line-height:12.5px;color:#217346;font-weight:bold;font-style:normal;transform:scaleX(1.0325);transform-origin:0 0;">microexcel.ru</div>
<svg class="a" style="left:241px;top:628px" width="16" height="16" viewBox="0 0 16 16"><circle cx="8" cy="8" r="7.3" fill="none" stroke="#6a6a6a" stroke-width="1.1"/><path d="M8 3.8V12.2M3.8 8H12.2" stroke="#6a6a6a" stroke-width="1.6"/></svg>
<div class="a" style="left:555px;top:631px;width:2px;height:2px;background:#9a9a9a;"></div>
<div class="a" style="left:555px;top:635px;width:2px;height:2px;background:#9a9a9a;"></div>
<div class="a" style="left:555px;top:639px;width:2px;height:2px;background:#9a9a9a;"></div>
<div class="a" style="left:572px;top:629px;width:15px;height:15px;background:#fff;border:1px solid #b9b9b9"></div>
<svg class="a" style="left:576px;top:633px" width="5" height="7" viewBox="0 0 5 7"><path d="M5 0V7L0 3.5Z" fill="#6a6a6a"/></svg>
<div class="a" style="left:587px;top:629px;width:270px;height:15px;background:#fff;border:1px solid #b9b9b9"></div>
<div class="a" style="left:857px;top:629px;width:31px;height:15px;background:#e0e0e0;"></div>
<div class="a" style="left:888px;top:629px;width:15px;height:15px;background:#fff;border:1px solid #b9b9b9"></div>
<svg class="a" style="left:893px;top:633px" width="5" height="7" viewBox="0 0 5 7"><path d="M0 0V7L5 3.5Z" fill="#6a6a6a"/></svg>
<div class="a" style="left:1px;top:650px;width:923px;height:1px;background:#d5d5d5;"></div>
<div class="a" style="left:1px;top:651px;width:923px;height:21px;background:#f3f3f3;"></div>
<div class="a t" style="left:8.66px;top:655.00px;font-size:11.5px;line-height:11.5px;color:#262626;font-weight:normal;font-style:normal;transform:scaleX(1.0441);transform-origin:0 0;">Готово</div>
<svg class="a" style="left:73px;top:654px" width="14" height="13" viewBox="0 0 14 13"><circle cx="3" cy="3" r="3" fill="#555"/><path d="M7 1.5H13.5" stroke="#555" stroke-width="2"/><rect x="1.5" y="4.5" width="12" height="8" fill="none" stroke="#555"/><path d="M3 7H12M3 9.5H12" stroke="#555" stroke-dasharray="1.5 1"/></svg>
<div class="a" style="left:624px;top:651px;width:38px;height:20px;background:#c8c8c8;"></div>
<svg class="a" style="left:636px;top:654px" width="13" height="13" viewBox="0 0 13 13"><rect x="0.5" y="0.5" width="12" height="12" fill="none" stroke="#6a6a6a"/><path d="M0.5 4.5H12.5M0.5 8.5H12.5M4.5 0.5V12.5M8.5 0.5V12.5" stroke="#6a6a6a"/></svg>
<svg class="a" style="left:674px;top:654px" width="14" height="13" viewBox="0 0 14 13"><rect x="0.5" y="0.5" width="13" height="12" fill="none" stroke="#6a6a6a"/><rect x="3.5" y="2.5" width="7" height="8" fill="none" stroke="#6a6a6a"/><path d="M5 4.5H9M5 6.5H9M5 8.5H9" stroke="#6a6a6a"/></svg>
<svg class="a" style="left:712px;top:654px" width="14" height="13" viewBox="0 0 14 13"><rect x="0.5" y="0.5" width="13" height="12" fill="none" stroke="#6a6a6a"/><path d="M5 0.5V6.5H9.5V0.5M0.5 6.5H5" fill="none" stroke="#6a6a6a"/></svg>
<div class="a" style="left:743px;top:660px;width:6px;height:2px;background:#555;"></div>
<div class="a" style="left:753px;top:660px;width:100px;height:1px;background:#a0a0a0;"></div>
<div class="a" style="left:801px;top:655px;width:5px;height:11px;background:#6a6a6a;"></div>
<svg class="a" style="left:857px;top:657px" width="7" height="7" viewBox="0 0 7 7"><path d="M3.5 0V7M0 3.5H7" stroke="#555" stroke-width="1.6"/></svg>
<div class="a t" style="left:875.15px;top:654.00px;font-size:12.3px;line-height:12.3px;color:#262626;font-weight:normal;font-style:normal;transform:scaleX(0.8529);transform-origin:0 0;">100 %</div>
<div class="a" style="left:0px;top:0px;width:1px;height:673px;background:#00733f;"></div>
<div class="a" style="left:924px;top:0px;width:1px;height:673px;background:#00733f;"></div>
<div class="a" style="left:1px;top:671px;width:923px;height:1px;background:#fbfbfb;"></div>
<div class="a" style="left:0px;top:672px;width:925px;height:1px;background:#00733f;"></div>
</body></html>
